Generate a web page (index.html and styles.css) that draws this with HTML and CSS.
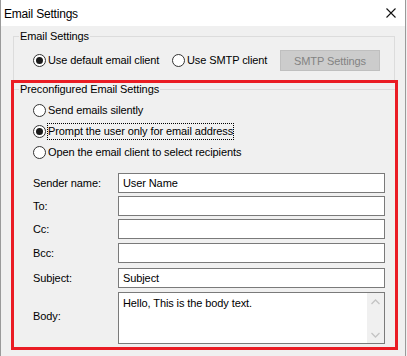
FILE: index.html
```html
<!DOCTYPE html>
<html>
<head>
<meta charset="utf-8">
<link rel="stylesheet" href="styles.css">
</head>
<body>
<div class="window">
  <div class="titlebar">
    <span class="title">Email Settings</span>
    <svg class="close" width="10" height="10" viewBox="0 0 10 10"><path d="M0.5 0.5 L9.5 9.5 M9.5 0.5 L0.5 9.5" stroke="#111" stroke-width="1.1" fill="none"/></svg>
  </div>
  <div class="content">
    <fieldset class="group group-top">
      <legend>Email Settings</legend>
      <div class="client-row">
        <label class="radio r-default"><span class="dot checked"></span><span>Use default email client</span></label>
        <label class="radio r-smtp"><span class="dot"></span><span>Use SMTP client</span></label>
        <button class="btn" disabled>SMTP Settings</button>
      </div>
    </fieldset>
    <div class="highlight">
      <fieldset class="group group-pre">
        <legend>Preconfigured Email Settings</legend>
        <div class="modes">
          <label class="radio mode"><span class="dot"></span><span class="txt">Send emails silently</span></label>
          <label class="radio mode"><span class="dot checked"></span><span class="txt focus">Prompt the user only for email address</span></label>
          <label class="radio mode"><span class="dot"></span><span class="txt">Open the email client to select recipients</span></label>
        </div>
        <div class="form">
          <div class="frow"><span class="lbl">Sender name:</span><div class="input">User Name</div></div>
          <div class="frow g3"><span class="lbl">To:</span><div class="input"></div></div>
          <div class="frow g3"><span class="lbl">Cc:</span><div class="input"></div></div>
          <div class="frow g4"><span class="lbl">Bcc:</span><div class="input"></div></div>
          <div class="frow g5"><span class="lbl">Subject:</span><div class="input">Subject</div></div>
          <div class="frow g4 body-row"><span class="lbl body-lbl">Body:</span>
            <div class="textarea">
              <div class="ta-text">Hello, This is the body text.</div>
              <div class="scroll">
                <div class="sbtn"><svg width="9" height="6" viewBox="0 0 9 6"><path d="M0.5 5 L4.5 1 L8.5 5" stroke="#c4c4c4" stroke-width="1.3" fill="none"/></svg></div>
                <div class="sbtn"><svg width="9" height="6" viewBox="0 0 9 6"><path d="M0.5 1 L4.5 5 L8.5 1" stroke="#c4c4c4" stroke-width="1.3" fill="none"/></svg></div>
              </div>
            </div>
          </div>
        </div>
      </fieldset>
    </div>
  </div>
</div>
</body>
</html>
```
FILE: styles.css
```css
* { box-sizing: border-box; }
html, body {
  margin: 0;
  padding: 0;
  background: #f0f0f0;
}
body {
  width: 407px;
  height: 356px;
  overflow: hidden;
  font-family: "Liberation Sans", Arial, sans-serif;
  font-size: 11px;
  letter-spacing: -0.1px;
  color: #000;
}
.window {
  width: 406px;
  height: 356px;
  border-left: 1px solid #9a9a9a;
  border-right: 1px solid #9a9a9a;
  background: #f0f0f0;
}
.titlebar {
  height: 26px;
  background: #fff;
  display: flex;
  align-items: center;
  justify-content: space-between;
  padding-left: 3px;
  padding-right: 9px;
}
.title {
  font-size: 12px;
  line-height: 16px;
  padding-top: 1px;
  letter-spacing: -0.2px;
}
.close { display: block; }
.content {
  padding-top: 4px;
}
.group {
  margin: 0;
  padding: 0;
  min-width: 0;
  border: 1px solid #dcdcdc;
}
.group legend {
  margin-left: 5px;
  padding: 0 1px;
  line-height: 13px;
  font-size: 11px;
}
.group-top {
  margin: 0 10px 0 12px;
  border-bottom: none;
}
.client-row {
  display: flex;
  align-items: center;
  height: 37px;
  padding: 7px 0 9px 19px;
}
.radio {
  display: flex;
  align-items: center;
  gap: 2px;
  line-height: 15px;
  white-space: nowrap;
}
.dot {
  width: 13px;
  height: 13px;
  flex: none;
  border: 1px solid #333;
  border-radius: 50%;
  background: #fff;
  display: flex;
  align-items: center;
  justify-content: center;
}
.dot.checked::after {
  content: "";
  width: 7px;
  height: 7px;
  border-radius: 50%;
  background: #1a1a1a;
}
.r-default { width: 139px; }
.r-smtp { width: 108px; }
.btn {
  width: 100px;
  height: 21px;
  padding: 0;
  background: #cccccc;
  border: 1px solid #bfbfbf;
  color: #838383;
  font-family: inherit;
  font-size: 11px;
  letter-spacing: -0.1px;
}
.highlight {
  margin: 0 7px 0 10px;
  height: 270px;
  border: 3px solid #ea1c24;
}
.group-pre {
  border: none;
  border-top: 1px solid #dcdcdc;
}
.modes {
  padding: 4px 0 0 19px;
}
.mode {
  height: 21px;
}
.txt {
  border: 1px solid transparent;
  padding: 0;
  margin-left: -1px;
}
.txt.focus {
  border: 1px dotted #000;
}
.form {
  padding: 10px 0 0 19px;
}
.frow {
  display: flex;
  align-items: center;
  height: 20px;
}
.g3 { margin-top: 3px; }
.g4 { margin-top: 4px; }
.g5 { margin-top: 5px; }
.lbl {
  width: 85px;
  flex: none;
}
.input {
  width: 267px;
  height: 20px;
  border: 1px solid #7a7a7a;
  background: #fff;
  padding: 0 4px;
  line-height: 18px;
}
.body-row {
  height: 52px;
}
.body-lbl {
  margin-top: -5px;
}
.textarea {
  width: 267px;
  height: 52px;
  border: 1px solid #7a7a7a;
  background: #fff;
  display: flex;
}
.ta-text {
  flex: 1;
  padding: 3px 4px 0;
  line-height: 15px;
}
.scroll {
  width: 17px;
  flex: none;
  background: #f0f0f0;
  display: flex;
  flex-direction: column;
  justify-content: space-between;
}
.sbtn {
  height: 17px;
  display: flex;
  align-items: center;
  justify-content: center;
}
.sbtn svg { display: block; }
```
